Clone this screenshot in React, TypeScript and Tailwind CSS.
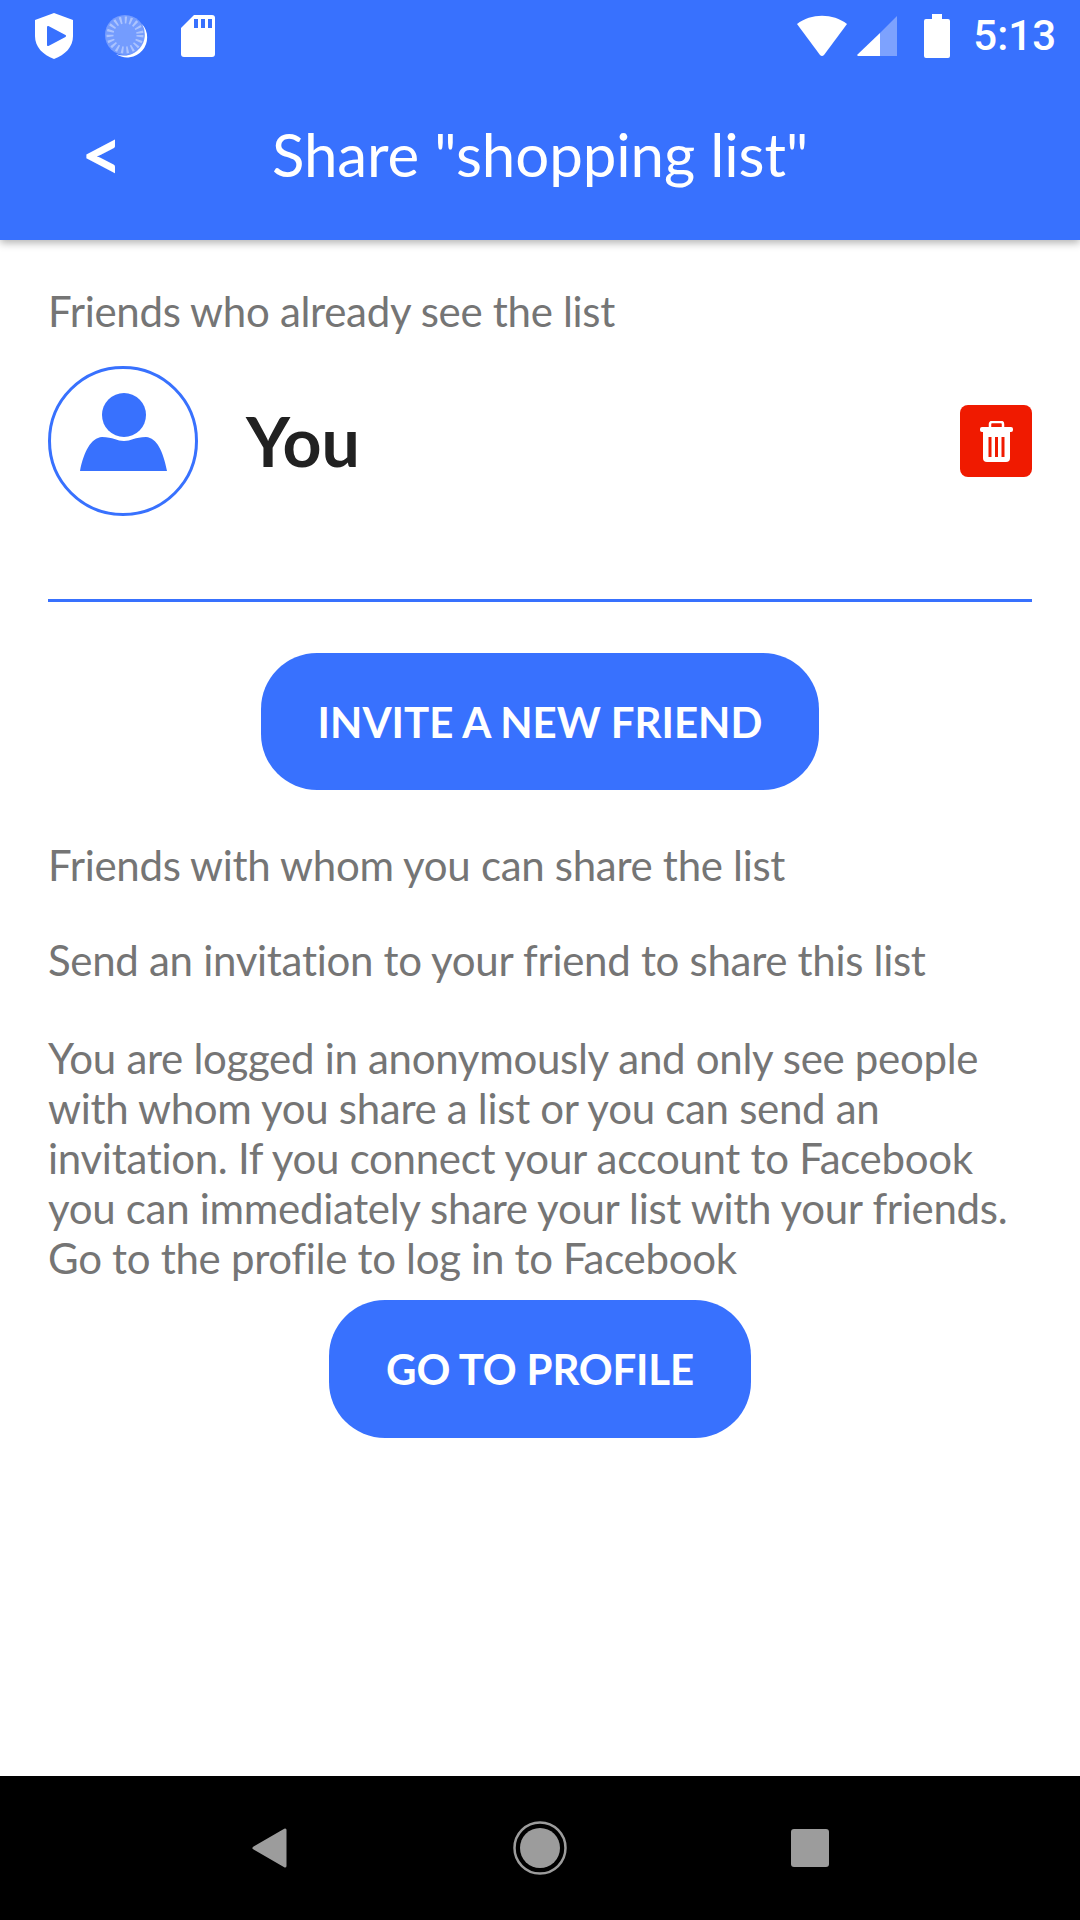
function StatusBar() {
  return (
    <div className="h-[72px] flex items-center justify-between pl-[34px] pr-[24px]">
      <div className="flex items-center">
        <svg width="40" height="48" viewBox="0 0 40 48">
          <path d="M20 1 L39 8 V24 C39 35 31 43 20 47 C9 43 1 35 1 24 V8 Z" fill="#fff" />
          <path d="M14 15 L31 24 L14 33 Z" fill="#3871fe" stroke="#3871fe" strokeWidth="2" strokeLinejoin="round" />
        </svg>
        <svg width="44" height="44" viewBox="0 0 44 44" className="ml-[30px]">
          <circle cx="21" cy="21" r="20" fill="#fff" fillOpacity="0.3" />
          <circle cx="21" cy="21" r="15" fill="none" stroke="#fff" strokeOpacity="0.4" strokeWidth="7" strokeDasharray="2 3" />
          <path d="M38 10 A20 20 0 0 1 12 40 A21 21 0 0 0 38 10 Z" fill="#fff" />
        </svg>
        <svg width="36" height="44" viewBox="0 0 36 44" className="ml-[32px]">
          <path d="M14 1 H32 A3 3 0 0 1 35 4 V40 A3 3 0 0 1 32 43 H4 A3 3 0 0 1 1 40 V14 Z" fill="#fff" />
          <rect x="14" y="5" width="4" height="9" fill="#3871fe" />
          <rect x="21" y="5" width="4" height="9" fill="#3871fe" />
          <rect x="28" y="5" width="4" height="9" fill="#3871fe" />
        </svg>
      </div>
      <div className="flex items-center">
        <svg width="52" height="42" viewBox="0 0 52 42">
          <path d="M1 9 C15 -2 37 -2 51 9 L28 40 Q26 42 24 40 Z" fill="#fff" />
        </svg>
        <svg width="42" height="42" viewBox="0 0 42 42" className="ml-[8px]">
          <path d="M1 40 L24 18 V41 H2 Z" fill="#fff" />
          <path d="M24 18 L41 1 V41 H24 Z" fill="#fff" fillOpacity="0.35" />
        </svg>
        <svg width="26" height="44" viewBox="0 0 26 44" className="ml-[26px]">
          <path d="M8 0 H18 V5 H24 A2 2 0 0 1 26 7 V42 A2 2 0 0 1 24 44 H2 A2 2 0 0 1 0 42 V7 A2 2 0 0 1 2 5 H8 Z" fill="#fff" />
        </svg>
        <span className="ml-[23px] text-white text-[42px] leading-none font-medium font-['Roboto',sans-serif]">5:13</span>
      </div>
    </div>
  );
}

function NavBar() {
  return (
    <div className="h-[144px] bg-black flex items-center pl-[252px] pr-[251px] justify-between">
      <svg width="36" height="40" viewBox="0 0 36 40">
        <path d="M33 2 V38 L2 20 Z" fill="#9c9c9c" stroke="#9c9c9c" strokeWidth="3" strokeLinejoin="round" />
      </svg>
      <svg width="54" height="54" viewBox="0 0 54 54">
        <circle cx="27" cy="27" r="25.5" fill="none" stroke="#9c9c9c" strokeWidth="2.5" />
        <circle cx="27" cy="27" r="20" fill="#9c9c9c" />
      </svg>
      <div className="w-[38px] h-[38px] rounded-[3px] bg-[#9c9c9c]" />
    </div>
  );
}

function PersonIcon() {
  return (
    <svg width="87" height="78" viewBox="0 0 87 78" className="mb-[18px]">
      <circle cx="44" cy="22" r="22" fill="#3871fe" />
      <path d="M0 78 C4 58 11 45 22 44 C33 44 37 48 44 48 C51 48 55 44 66 44 C77 45 83 58 87 78 Z" fill="#3871fe" />
    </svg>
  );
}

function TrashIcon() {
  return (
    <svg width="33" height="41" viewBox="0 0 33 41">
      <path d="M10 6 V3 A2 2 0 0 1 12 1 H21 A2 2 0 0 1 23 3 V6" fill="none" stroke="#fff" strokeWidth="2.5" />
      <rect x="0" y="6" width="33" height="5" rx="2" fill="#fff" />
      <path d="M3 11 H30 V37 A4 4 0 0 1 26 41 H7 A4 4 0 0 1 3 37 Z" fill="#fff" />
      <rect x="8.5" y="16" width="3" height="20" fill="#f01a00" />
      <rect x="15" y="16" width="3" height="20" fill="#f01a00" />
      <rect x="21.5" y="16" width="3" height="20" fill="#f01a00" />
    </svg>
  );
}

export default function App() {
  return (
    <div className="w-[1080px] h-[1920px] flex flex-col bg-white font-['Lato',sans-serif]">
      <header className="h-[240px] bg-[#3871fe] shadow-[0_3px_8px_rgba(0,0,0,0.3)] relative z-10">
        <StatusBar />
        <div className="h-[168px] relative flex items-center justify-center">
          <span className="absolute left-[81px] top-[45px] text-white text-[72px] font-bold leading-none">&lt;</span>
          <span className="text-white text-[60px] leading-none tracking-[-0.1px] mb-[4px]">Share "shopping list"</span>
        </div>
      </header>

      <main className="flex-1 px-[48px] text-[#757575] text-[42px] leading-[50px] tracking-[-0.3px]">
        <p className="pt-[46px]">Friends who already see the list</p>
        <div className="mt-[30px] flex items-center">
          <div className="w-[150px] h-[150px] rounded-full border-[3px] border-[#3871fe] flex items-center justify-center shrink-0">
            <PersonIcon />
          </div>
          <span className="ml-[48px] text-[68px] font-bold text-[#212121] leading-none tracking-normal">You</span>
          <div className="ml-auto w-[72px] h-[72px] rounded-[8px] bg-[#f01a00] flex items-center justify-center">
            <TrashIcon />
          </div>
        </div>
        <div className="mt-[83px] h-[3px] bg-[#3871fe]" />
        <div className="mt-[51px] flex justify-center">
          <button className="w-[558px] h-[137px] rounded-[56px] bg-[#3871fe] text-white text-[42px] font-bold tracking-normal">INVITE A NEW FRIEND</button>
        </div>
        <p className="mt-[50px]">Friends with whom you can share the list</p>
        <p className="mt-[45px]">Send an invitation to your friend to share this list</p>
        <p className="mt-[48px]">
          You are logged in anonymously and only see people with whom you share a list or you can send an invitation. If you connect your account to Facebook you can immediately share your list with your friends. Go to the profile to log in to Facebook
        </p>
        <div className="mt-[17px] flex justify-center">
          <button className="w-[422px] h-[138px] rounded-[56px] bg-[#3871fe] text-white text-[42px] font-bold tracking-[-0.2px]">GO TO PROFILE</button>
        </div>
      </main>

      <NavBar />
    </div>
  );
}
